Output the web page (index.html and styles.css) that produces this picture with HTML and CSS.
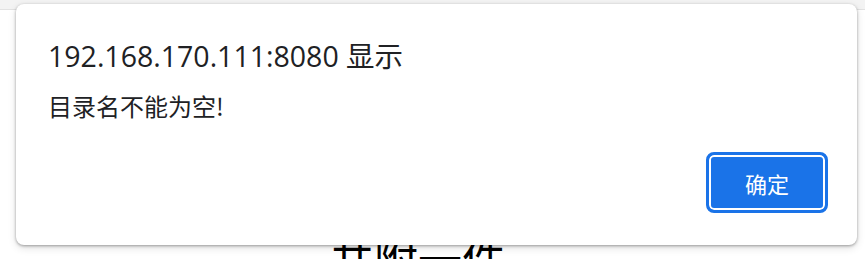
FILE: index.html
```html
<!DOCTYPE html>
<html lang="zh">
<head>
<meta charset="utf-8">
<link rel="stylesheet" href="styles.css">
</head>
<body>
<div class="page">
  <div class="topbar"></div>
  <div class="content">
    <h1 class="heading">共附一件</h1>
  </div>
</div>
<div class="dialog">
  <div class="title">192.168.170.111:8080 显示</div>
  <div class="message">目录名不能为空!</div>
  <div class="actions">
    <button class="ok">确定</button>
  </div>
</div>
</body>
</html>
```
FILE: styles.css
```css
html, body {
  margin: 0;
  padding: 0;
  width: 865px;
  height: 259px;
  overflow: hidden;
  background: #ffffff;
  font-family: "Noto Sans", "Noto Sans CJK SC", sans-serif;
}
.page {
  display: flex;
  flex-direction: column;
  height: 259px;
  overflow: hidden;
}
.topbar {
  height: 9px;
  background: #f3f3f3;
  border-bottom: 1px solid #e2e2e2;
}
.content {
  flex: 1;
  display: flex;
  justify-content: flex-start;
  padding-left: 330px;
  overflow: hidden;
}
.heading {
  margin: 221px 0 0 0;
  font-family: "Noto Sans CJK SC", sans-serif;
  font-weight: 400;
  font-size: 44px;
  line-height: 52px;
  color: #000;
}
.dialog {
  position: absolute;
  left: 16px;
  top: 4px;
  width: 841px;
  height: 241px;
  box-sizing: border-box;
  background: #fff;
  border-radius: 8px;
  box-shadow: 0 1px 3px rgba(0,0,0,0.35), 0 3px 8px rgba(0,0,0,0.12);
  padding: 33px 29px 0 32px;
  display: flex;
  flex-direction: column;
}
.title {
  font-family: "Open Sans", "Noto Sans CJK SC", sans-serif;
  font-size: 28.5px;
  line-height: 38px;
  color: #202124;
}
.message {
  margin-top: 15px;
  font-family: "Noto Sans CJK SC", sans-serif;
  font-size: 24px;
  line-height: 32px;
  color: #202124;
}
.actions {
  display: flex;
  justify-content: flex-end;
  margin-top: 30px;
}
.ok {
  width: 122px;
  height: 61px;
  box-sizing: border-box;
  background: #1a73e8;
  border: 3px solid #1a73e8;
  box-shadow: inset 0 0 0 2px #ffffff;
  border-radius: 8px;
  color: #fff;
  font-family: "Noto Sans CJK SC", sans-serif;
  font-size: 22px;
  padding: 0;
}
```
